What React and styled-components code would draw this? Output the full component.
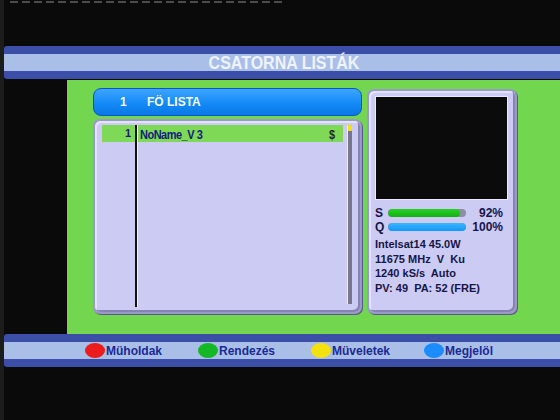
import React from "react";
import styled, { createGlobalStyle } from "styled-components";

const GlobalStyle = createGlobalStyle`
  html, body {
    margin: 0;
    padding: 0;
    background: #0a0a0a;
  }
  body {
    font-family: "Liberation Sans", Arial, sans-serif;
  }
`;

const Screen = styled.div`
  width: 556px;
  height: 420px;
  border-left: 4px solid #1c1c1c;
  background: #0a0a0a;
  display: flex;
  flex-direction: column;
  overflow: hidden;
`;

const TopDashes = styled.div`
  margin: 1px 0 0 6px;
  width: 272px;
  height: 2px;
  background: repeating-linear-gradient(90deg, #4c4c4c 0 8px, transparent 8px 12px);
`;

const Bar = styled.div`
  margin-top: ${(p) => p.$top || 0}px;
  height: 17px;
  border-top: 8px solid #3b4ea8;
  border-bottom: 8px solid #3b4ea8;
  background: #a9bfe8;
  border-radius: 3px 0 0 3px;
  display: flex;
  align-items: center;
`;

const Title = styled.div`
  flex: 1;
  text-align: center;
  color: #eef2fb;
  font-size: 16px;
  font-weight: bold;
  padding-left: 4px;
  transform: scaleY(1.15);
`;

const Middle = styled.div`
  margin-top: 1px;
  height: 254px;
  display: flex;
`;

const Blackout = styled.div`
  width: 63px;
  background: #0a0a0a;
`;

const Green = styled.div`
  flex: 1;
  background: #73d64f;
  padding: 8px 0 0 26px;
  display: flex;
  gap: 5px;
  align-items: flex-start;
`;

const LeftCol = styled.div`
  width: 269px;
  display: flex;
  flex-direction: column;
  gap: 3px;
`;

const ListHeader = styled.div`
  height: 26px;
  border: 1px solid #0b55c8;
  border-radius: 8px;
  background: linear-gradient(#3ea4ff, #1188f6 60%, #0a78e6);
  display: flex;
  align-items: center;
  color: #f4f8ff;
  font-size: 12px;
  font-weight: bold;
  padding-left: 26px;
  box-sizing: content-box;
`;

const HeaderNum = styled.span`
  width: 27px;
`;

const Panel = styled.div`
  box-sizing: border-box;
  width: ${(p) => p.$w}px;
  height: ${(p) => p.$h}px;
  background: #cbcbf3;
  border: 2px solid #9a9ac6;
  border-radius: 7px;
  box-shadow: inset -2px -2px 0 #8585b4, inset 2px 2px 0 #e2e2fc, 1px 1px 0 #5a5a8a;
`;

const ListPanel = styled(Panel)`
  padding: 4px 8px 5px 7px;
  display: flex;
`;

const ListArea = styled.div`
  flex: 1;
  height: 182px;
  background: linear-gradient(90deg, transparent 33px, #111 33px, #111 35px, #f2f2ff 35px, #f2f2ff 36px, transparent 36px);
`;

const Row = styled.div`
  height: 17px;
  display: flex;
  align-items: center;
  background: ${(p) => (p.$active ? "#7ed957" : "transparent")};
  color: #16207a;
  font-size: 11px;
  font-weight: bold;
`;

const NumCell = styled.div`
  width: 29px;
  text-align: right;
  padding-right: 4px;
  height: 100%;
  line-height: 17px;
  border-right: 2px solid #111;
  box-shadow: 1px 0 0 #f2f2ff;
`;

const NameCell = styled.div`
  flex: 1;
  padding-left: 3px;
  letter-spacing: -0.5px;
  transform: scaleY(1.2);
  transform-origin: left center;
`;

const Flag = styled.div`
  width: 14px;
  color: #1c2a1c;
  transform: scaleY(1.2);
`;

const Scroll = styled.div`
  width: 5px;
  height: 179px;
  margin-left: 4px;
  background: #76768e;
  border-left: 1px solid #ececff;
  box-sizing: border-box;
`;

const Thumb = styled.div`
  height: 6px;
  background: #f2e21a;
  border-radius: 1px;
`;

const InfoPanel = styled(Panel)`
  margin-top: 1px;
  padding: 5px 7px 0 6px;
  display: flex;
  flex-direction: column;
`;

const Preview = styled.div`
  height: 102px;
  background: #0b0b0b;
  border: 1px solid #e8e8ff;
`;

const Signals = styled.div`
  margin-top: 6px;
`;

const SigRow = styled.div`
  height: 14px;
  display: flex;
  align-items: center;
  color: #15154a;
  font-size: 12px;
  font-weight: bold;
`;

const SigLabel = styled.span`
  width: 13px;
`;

const Track = styled.div`
  width: 78px;
  height: 8px;
  border-radius: 4px;
  background: #8e8ea2;
  overflow: hidden;
`;

const Fill = styled.div`
  height: 100%;
  border-radius: 4px;
  background: ${(p) => p.$color};
`;

const Pct = styled.span`
  flex: 1;
  text-align: right;
  padding-right: 5px;
`;

const Info = styled.div`
  margin-top: 3px;
  color: #15154a;
  font-size: 11px;
  font-weight: bold;
  line-height: 14.7px;
`;

const Keys = styled.div`
  display: grid;
  grid-template-columns: repeat(4, 113px);
  padding-left: 81px;
`;

const Key = styled.div`
  display: flex;
  align-items: center;
  color: #1a2a94;
  font-size: 12px;
  font-weight: bold;
`;

const Dot = styled.span`
  width: 20px;
  height: 15px;
  border-radius: 50%;
  background: ${(p) => p.$color};
  margin-right: 1px;
`;

const signals = [
  { label: "S", value: 92, color: "linear-gradient(#2ad02a, #12b012)" },
  { label: "Q", value: 100, color: "linear-gradient(#3ab4ff, #1398f8)" },
];

const keys = [
  { color: "#ec1c1c", text: "Müholdak" },
  { color: "#14b824", text: "Rendezés" },
  { color: "#f4e20e", text: "Müveletek" },
  { color: "#1a8cff", text: "Megjelöl" },
];

export default function App() {
  return (
    <>
      <GlobalStyle />
      <Screen>
        <TopDashes />
        <Bar $top={43}>
          <Title>CSATORNA LISTÁK</Title>
        </Bar>
        <Middle>
          <Blackout />
          <Green>
            <LeftCol>
              <ListHeader>
                <HeaderNum>1</HeaderNum>
                FÖ LISTA
              </ListHeader>
              <ListPanel $w={269} $h={195}>
                <ListArea>
                  <Row $active>
                    <NumCell>1</NumCell>
                    <NameCell>NoName_V 3</NameCell>
                    <Flag>$</Flag>
                  </Row>
                </ListArea>
                <Scroll>
                  <Thumb />
                </Scroll>
              </ListPanel>
            </LeftCol>
            <InfoPanel $w={150} $h={225}>
              <Preview />
              <Signals>
                {signals.map((s) => (
                  <SigRow key={s.label}>
                    <SigLabel>{s.label}</SigLabel>
                    <Track>
                      <Fill $color={s.color} style={{ width: `${s.value}%` }} />
                    </Track>
                    <Pct>{s.value}%</Pct>
                  </SigRow>
                ))}
              </Signals>
              <Info>
                <div>Intelsat14 45.0W</div>
                <div>11675 MHz&nbsp; V&nbsp; Ku</div>
                <div>1240 kS/s&nbsp; Auto</div>
                <div>PV: 49&nbsp; PA: 52 (FRE)</div>
              </Info>
            </InfoPanel>
          </Green>
        </Middle>
        <Bar>
          <Keys>
            {keys.map((k) => (
              <Key key={k.text}>
                <Dot $color={k.color} />
                {k.text}
              </Key>
            ))}
          </Keys>
        </Bar>
      </Screen>
    </>
  );
}
